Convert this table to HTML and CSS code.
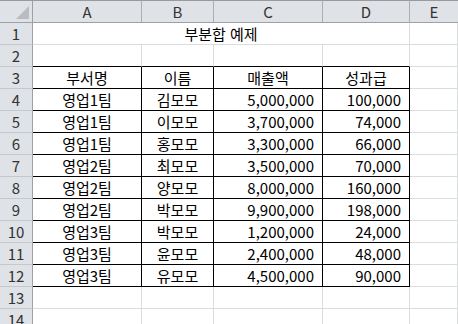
FILE: index.html
```html
<!DOCTYPE html>
<html lang="ko">
<head>
<meta charset="utf-8">
<link rel="stylesheet" href="styles.css">
</head>
<body>
<div class="sheet">
  <div class="hd corner"><span class="tri"></span></div>
  <div class="hd col">A</div>
  <div class="hd col">B</div>
  <div class="hd col">C</div>
  <div class="hd col">D</div>
  <div class="hd col last">E</div>

  <div class="hd row">1</div>
  <div class="c title">부분합 예제</div>
  <div class="c"></div>

  <div class="hd row">2</div>
  <div class="c tb"></div><div class="c tb"></div><div class="c tb"></div><div class="c tb"></div><div class="c"></div>

  <div class="hd row">3</div>
  <div class="c t ctr">부서명</div><div class="c t ctr">이름</div><div class="c t ctr">매출액</div><div class="c t ctr">성과급</div><div class="c"></div>

  <div class="hd row">4</div>
  <div class="c t ctr">영업1팀</div><div class="c t ctr">김모모</div><div class="c t num">5,000,000</div><div class="c t num">100,000</div><div class="c"></div>

  <div class="hd row">5</div>
  <div class="c t ctr">영업1팀</div><div class="c t ctr">이모모</div><div class="c t num">3,700,000</div><div class="c t num">74,000</div><div class="c"></div>

  <div class="hd row">6</div>
  <div class="c t ctr">영업1팀</div><div class="c t ctr">홍모모</div><div class="c t num">3,300,000</div><div class="c t num">66,000</div><div class="c"></div>

  <div class="hd row">7</div>
  <div class="c t ctr">영업2팀</div><div class="c t ctr">최모모</div><div class="c t num">3,500,000</div><div class="c t num">70,000</div><div class="c"></div>

  <div class="hd row">8</div>
  <div class="c t ctr">영업2팀</div><div class="c t ctr">양모모</div><div class="c t num">8,000,000</div><div class="c t num">160,000</div><div class="c"></div>

  <div class="hd row">9</div>
  <div class="c t ctr">영업2팀</div><div class="c t ctr">박모모</div><div class="c t num">9,900,000</div><div class="c t num">198,000</div><div class="c"></div>

  <div class="hd row">10</div>
  <div class="c t ctr">영업3팀</div><div class="c t ctr">박모모</div><div class="c t num">1,200,000</div><div class="c t num">24,000</div><div class="c"></div>

  <div class="hd row">11</div>
  <div class="c t ctr">영업3팀</div><div class="c t ctr">윤모모</div><div class="c t num">2,400,000</div><div class="c t num">48,000</div><div class="c"></div>

  <div class="hd row">12</div>
  <div class="c t ctr">영업3팀</div><div class="c t ctr">유모모</div><div class="c t num">4,500,000</div><div class="c t num">90,000</div><div class="c"></div>

  <div class="hd row">13</div>
  <div class="c"></div><div class="c"></div><div class="c"></div><div class="c"></div><div class="c"></div>

  <div class="hd row">14</div>
  <div class="c"></div><div class="c"></div><div class="c"></div><div class="c"></div><div class="c"></div>
</div>
</body>
</html>
```

FILE: styles.css
```css
* { box-sizing: border-box; margin: 0; padding: 0; }
html, body { background: #ffffff; }
body {
  width: 458px;
  height: 324px;
  overflow: hidden;
  font-family: "Noto Sans CJK KR", "Noto Sans", sans-serif;
  font-size: 15px;
  color: #000;
}
.sheet {
  display: grid;
  grid-template-columns: 33px 109px 72px 109px 87px 48px;
  grid-auto-rows: 22px;
  grid-template-rows: 23px;
}
.hd {
  background: #dfe2e6;
  color: #333;
  display: flex;
  align-items: center;
  justify-content: center;
  line-height: 1;
}
.col {
  border-top: 1px solid #9a9a9a;
  border-right: 1px solid #abaeb3;
  border-bottom: 1px solid #9ea0a4;
}
.col.last { border-right: none; }
.corner {
  position: relative;
  border-top: 1px solid #9a9a9a;
  border-right: 1px solid #9ea0a4;
  border-bottom: 1px solid #9ea0a4;
}
.tri {
  position: absolute;
  right: 3px;
  bottom: 3px;
  width: 0;
  height: 0;
  border-left: 13px solid transparent;
  border-bottom: 13px solid #b9bcc1;
}
.row {
  border-right: 1px solid #9ea0a4;
  border-bottom: 1px solid #c4c7cc;
}
.c {
  border-right: 1px solid #dadcdd;
  border-bottom: 1px solid #dadcdd;
  display: flex;
  align-items: center;
  line-height: 1;
  white-space: nowrap;
}
.title {
  grid-column: span 4;
  justify-content: center;
}
.tb { border-bottom-color: #000; }
.t {
  border-right-color: #000;
  border-bottom-color: #000;
}
.ctr { justify-content: center; }
.num { justify-content: flex-end; padding-right: 8px; }
```
